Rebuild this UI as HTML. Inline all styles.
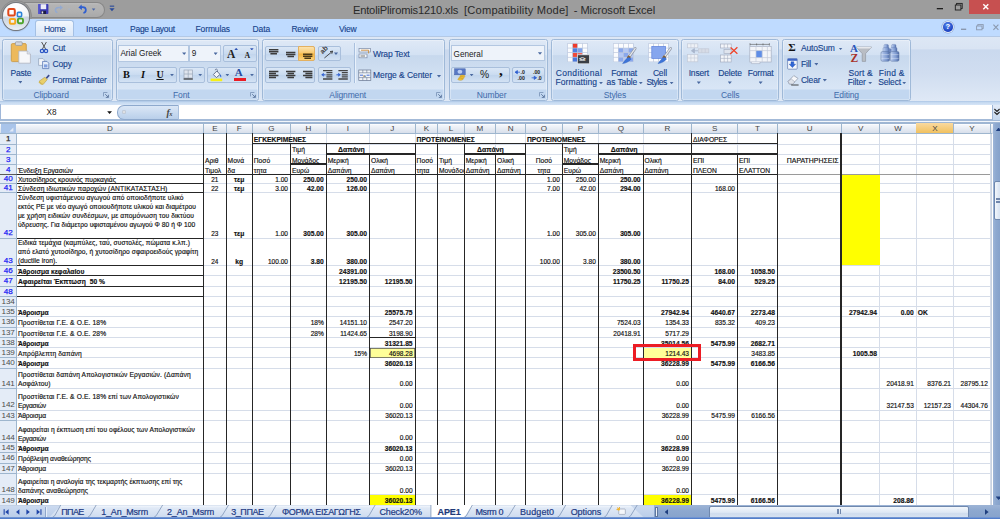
<!DOCTYPE html>
<html lang="el">
<head>
<meta charset="utf-8">
<title>EntoliPliromis1210.xls [Compatibility Mode] - Microsoft Excel</title>
<style>
html,body{margin:0;padding:0;}
body{width:1000px;height:519px;overflow:hidden;position:relative;background:#fff;font-family:"Liberation Sans",sans-serif;}
#app{position:absolute;left:0;top:0;width:1000px;height:519px;overflow:hidden;background:#fff;}
.ln{position:absolute;}
.c{position:absolute;font-size:6.7px;line-height:8.6px;color:#111;-webkit-text-stroke:0.16px #111;white-space:nowrap;overflow:hidden;box-sizing:border-box;padding:0 1.6px 0 1.4px;text-align:left;}
.c.r{text-align:right;font-size:6.55px;padding-right:2.6px;}
.c.n{font-size:6.4px;}
.c.r.b{font-size:6.7px;}
.c.m{text-align:center;}
.c.b{font-weight:bold;color:#111;}
.c.w{white-space:nowrap;line-height:9.0px;}
.rh{position:absolute;left:0;width:16.4px;font-size:8.1px;letter-spacing:-0.12px;display:flex;align-items:flex-end;justify-content:center;line-height:8.6px;}
.rh span{display:block;margin-bottom:-0.1px;}
.rh.k span{-webkit-text-stroke:0.25px currentColor;}
.ch{position:absolute;top:124.1px;height:10px;line-height:10px;font-size:8.1px;color:#444;text-align:center;}
.colhdr{background:linear-gradient(#ffffff 0,#f2f5fa 14%,#e6ebf3 50%,#d4dce9 100%);}
.t{position:absolute;white-space:nowrap;color:#15428b;font-size:8.5px;line-height:10px;letter-spacing:-0.17px;margin-top:-1px;-webkit-text-stroke:0.12px #15428b;}
.gl{position:absolute;white-space:nowrap;color:#3e6aaa;font-size:8.5px;line-height:10px;text-align:center;letter-spacing:-0.12px;margin-top:-0.9px;}
.grp{position:absolute;top:38.6px;height:62px;border:1px solid #9fb9d8;border-radius:2.5px;box-sizing:border-box;background:linear-gradient(#dfe9f6 0%,#d3e1f3 25%,#c7d8ed 26%,#d9e6f6 82%,#c2d7f0 83%,#c2d7f0 100%);box-shadow:inset 0 0 0 0.6px rgba(255,255,255,.55);}
.btng{position:absolute;border:1px solid #a9bfdc;border-radius:2px;box-sizing:border-box;background:linear-gradient(#dbe7f6,#c9dbf0 50%,#c0d4ec 51%,#d3e2f4);}
.inp{position:absolute;border:1px solid #b3c7e1;box-sizing:border-box;background:#eef3fa;}
.arr{position:absolute;width:4.2px;height:2.5px;background:#4a69a0;clip-path:polygon(0 0,100% 0,50% 100%);margin-left:-0.5px;}
.tb{font-size:9px;line-height:11px;color:#1c3a84;white-space:nowrap;text-align:left;-webkit-text-stroke:0.2px #1c3a84;}
.tt{top:3.9px;font-size:11.15px;line-height:13px;color:#2a2a2a;white-space:pre;}
</style>
</head>
<body>
<div id="app">
<!-- ===== title bar ===== -->
<div class="ln" style="left:0;top:0;width:1000px;height:19.2px;background:#9d9d9d"></div>
<div class="ln" style="left:0;top:19px;width:1000px;height:18px;background:#bfdbff"></div>
<div class="ln tt" style="left:352.9px;letter-spacing:-0.17px">EntoliPliromis1210.xls</div>
<div class="ln tt" style="left:464.1px;letter-spacing:0.18px">[Compatibility Mode]</div>
<div class="ln tt" style="left:573.7px;letter-spacing:-0.05px">- Microsoft Excel</div>
<!-- window buttons -->
<div class="ln" style="left:969.2px;top:0;width:30.8px;height:14px;background:#c75050"></div>
<svg class="ln" style="left:930px;top:0" width="70" height="16" viewBox="0 0 70 16">
<rect x="6.8" y="8" width="6.2" height="1.3" fill="#1e1e1e"/>
<rect x="26.6" y="3.4" width="5.6" height="5" fill="none" stroke="#1e1e1e" stroke-width="0.9"/>
<rect x="25.3" y="5" width="5.6" height="5" fill="#9d9d9d" stroke="#1e1e1e" stroke-width="0.9"/>
<path d="M53.3 4.3 L58.3 9.3 M58.3 4.3 L53.3 9.3" stroke="#fff" stroke-width="1.4" fill="none"/>
</svg>
<!-- QAT -->
<div class="ln" style="left:20px;top:1.6px;width:85.4px;height:16.4px;border-radius:0 8.2px 8.2px 0;background:linear-gradient(#bcbcbc 0,#b4b4b4 14%,#b0b0b0 60%,#a9a9a9 100%);border:1px solid #878787;border-left:none;box-sizing:border-box"></div>
<div class="ln" style="left:0;top:0;width:40px;height:19.2px;overflow:hidden"><div class="ln" style="left:-0.4px;top:0.4px;width:32px;height:32px;border-radius:50%;background:#9d9d9d;border:1.2px solid #8c8c8c;box-sizing:border-box"></div></div>
<svg class="ln" style="left:36px;top:3.1px" width="84" height="14" viewBox="0 0 84 14">
<!-- save -->
<rect x="2.2" y="1" width="10.2" height="10" rx="0.8" fill="#3b3bb4"/>
<rect x="2.2" y="1" width="1.6" height="10" fill="#5a5ad0"/>
<rect x="4.6" y="1.2" width="5.6" height="5" fill="#ececf8"/>
<rect x="5" y="7.8" width="5" height="3.2" fill="#1c1c44"/>
<rect x="5.6" y="8.4" width="1.6" height="2.2" fill="#e4e4ee"/>
<!-- redo (disabled) -->
<path d="M21.4 9.6 C18.6 8.8 18.6 4.4 22.6 4.4 L24.6 4.4" fill="none" stroke="#93a9cf" stroke-width="1.5"/>
<path d="M24 2.2 L27 4.6 L24 7 Z" fill="#93a9cf"/>
<path d="M31.6 5.6 L35 5.6 L33.3 7.6 Z" fill="#a9b3c3"/>
<!-- undo -->
<path d="M47.4 10 C50.8 9.2 50.8 4.2 46.6 4.2 L44.8 4.2" fill="none" stroke="#2f5fd0" stroke-width="1.7"/>
<path d="M45.6 1.6 L42.4 4.4 L46 7 Z" fill="#2f5fd0"/>
<path d="M55.8 5.6 L59.4 5.6 L57.6 7.8 Z" fill="#4a67a6"/>
<!-- customize -->
<rect x="73.8" y="2.6" width="4.4" height="1.1" fill="#2a4a9a"/>
<path d="M73.4 5.2 L78.6 5.2 L76 8.2 Z" fill="#2a4a9a"/>
</svg>
<!-- office button -->
<div class="ln" style="left:2.5px;top:3.3px;width:26.3px;height:26.3px;border-radius:50%;background:radial-gradient(circle at 50% 20%,rgba(255,255,255,.95) 0%,rgba(255,255,255,0) 55%),linear-gradient(#fbfbfc 0%,#eff1f4 47%,#cbd4e0 53%,#dfe5ec 85%,#eef1f5 100%);box-shadow:0 0 0 1.1px #74777d, 0 1px 1.6px rgba(0,0,0,.4)"></div>
<svg class="ln" style="left:0;top:0" width="32" height="32" viewBox="0 0 32 32">
<rect x="8.3" y="9.1" width="6.5" height="6.5" rx="1.3" fill="rgba(255,255,255,.6)" stroke="#e0481a" stroke-width="2"/>
<rect x="17.4" y="12.4" width="4.2" height="4.2" rx="0.9" fill="rgba(255,255,255,.6)" stroke="#2c84d8" stroke-width="1.6"/>
<rect x="9.8" y="19" width="5.4" height="4.8" rx="1.1" fill="rgba(255,255,255,.6)" stroke="#f6a61a" stroke-width="1.9"/>
<rect x="17.9" y="18.6" width="5.1" height="4.6" rx="1.1" fill="rgba(255,255,255,.6)" stroke="#4ea42c" stroke-width="1.9"/>
</svg>
<!-- tabs -->
<div class="ln" style="left:35px;top:20px;width:39.4px;height:17px;border:1px solid #a4c0e4;border-bottom:none;border-radius:3px 3px 0 0;box-sizing:border-box;background:linear-gradient(#f2f7fd,#e3edfa 60%,#dbe7f6)"></div>
<div class="t" style="left:43.9px;top:24.5px;font-size:8.5px;letter-spacing:-0.297px">Home</div>
<div class="t" style="left:86.1px;top:24.5px;font-size:8.5px;letter-spacing:0.006px">Insert</div>
<div class="t" style="left:130px;top:24.5px;font-size:8.5px;letter-spacing:-0.258px">Page Layout</div>
<div class="t" style="left:195.5px;top:24.5px;font-size:8.5px;letter-spacing:-0.117px">Formulas</div>
<div class="t" style="left:252.5px;top:24.5px;font-size:8.5px;letter-spacing:-0.117px">Data</div>
<div class="t" style="left:291.5px;top:24.5px;font-size:8.5px;letter-spacing:-0.312px">Review</div>
<div class="t" style="left:339px;top:24.5px;font-size:8.5px;letter-spacing:-0.195px">View</div>
<!-- help & mdi buttons -->
<div class="ln" style="left:942.6px;top:21.8px;width:10.4px;height:10.4px;border-radius:50%;background:radial-gradient(circle at 45% 35%,#5b8df0,#1a3fc0 70%,#15309a);box-shadow:0 0 0 0.9px #e4ecf8,0 0 0 1.5px #8aa4d0"></div>
<div class="ln" style="left:942.6px;top:22px;width:10.4px;height:10.4px;line-height:10.4px;text-align:center;font-size:7.6px;font-weight:bold;color:#fff">?</div>
<svg class="ln" style="left:958px;top:21px" width="42" height="12" viewBox="0 0 42 12">
<rect x="3" y="7.6" width="5.2" height="1.4" fill="#8a98ae"/>
<rect x="19.8" y="3.6" width="5.4" height="3.8" fill="none" stroke="#8a98ae" stroke-width="0.9"/>
<rect x="18.6" y="5" width="5.4" height="3.8" fill="#bfdbff" stroke="#8a98ae" stroke-width="0.9"/>
<path d="M35.4 3.6 L40.4 8.8 M40.4 3.6 L35.4 8.8" stroke="#8a98ae" stroke-width="1.1" fill="none"/>
</svg>
<!-- ===== ribbon body ===== -->
<div class="ln" style="left:0;top:36px;width:1000px;height:66px;background:linear-gradient(#dde7f5 0%,#d9e4f3 18%,#cad9ee 20%,#d0ddf0 55%,#dfe9f6 100%);border-top:1px solid #b3c9e6;box-sizing:border-box"></div>
<div class="ln" style="left:0;top:101.4px;width:1000px;height:3.6px;background:linear-gradient(#a9c3e4 0,#c3d8f0 30%,#d6e5f7 100%)"></div>
<!-- group frames -->
<div class="grp" style="left:2.1px;width:110.8px"></div>
<div class="grp" style="left:115.8px;width:143.6px"></div>
<div class="grp" style="left:262.2px;width:183.2px"></div>
<div class="grp" style="left:448.6px;width:99.6px"></div>
<div class="grp" style="left:550.8px;width:128.2px"></div>
<div class="grp" style="left:681.2px;width:98px"></div>
<div class="grp" style="left:781.8px;width:129px"></div>
<!-- group labels -->
<div class="gl" style="left:2.6px;width:97px;top:91px">Clipboard</div>
<div class="gl" style="left:115.8px;width:131px;top:91px">Font</div>
<div class="gl" style="left:262.2px;width:171px;top:91px">Alignment</div>
<div class="gl" style="left:448.6px;width:86px;top:91px">Number</div>
<div class="gl" style="left:550.8px;width:128.2px;top:91px">Styles</div>
<div class="gl" style="left:681.2px;width:98px;top:91px">Cells</div>
<div class="gl" style="left:781.8px;width:129px;top:91px">Editing</div>
<!-- dialog launchers -->
<svg class="ln" style="left:103.4px;top:92px" width="6" height="6" viewBox="0 0 6 6"><path d="M0.5 4.4 V0.5 H4.4" stroke="#7f98bb" stroke-width="0.9" fill="none"/><path d="M2.2 2.2 L5.2 5.2 M5.4 2.8 V5.4 H2.8" stroke="#5b769d" stroke-width="0.9" fill="none"/></svg>
<svg class="ln" style="left:250.2px;top:92px" width="6" height="6" viewBox="0 0 6 6"><path d="M0.5 4.4 V0.5 H4.4" stroke="#7f98bb" stroke-width="0.9" fill="none"/><path d="M2.2 2.2 L5.2 5.2 M5.4 2.8 V5.4 H2.8" stroke="#5b769d" stroke-width="0.9" fill="none"/></svg>
<svg class="ln" style="left:436.4px;top:92px" width="6" height="6" viewBox="0 0 6 6"><path d="M0.5 4.4 V0.5 H4.4" stroke="#7f98bb" stroke-width="0.9" fill="none"/><path d="M2.2 2.2 L5.2 5.2 M5.4 2.8 V5.4 H2.8" stroke="#5b769d" stroke-width="0.9" fill="none"/></svg>
<svg class="ln" style="left:539px;top:92px" width="6" height="6" viewBox="0 0 6 6"><path d="M0.5 4.4 V0.5 H4.4" stroke="#7f98bb" stroke-width="0.9" fill="none"/><path d="M2.2 2.2 L5.2 5.2 M5.4 2.8 V5.4 H2.8" stroke="#5b769d" stroke-width="0.9" fill="none"/></svg>

<!-- ===== Clipboard ===== -->
<svg class="ln" style="left:9px;top:40px" width="26" height="28" viewBox="0 0 26 28">
<rect x="2.3" y="3.6" width="15" height="18" rx="1.2" fill="#ecb95c" stroke="#c9963c" stroke-width="0.8"/>
<rect x="6.4" y="1.8" width="6.8" height="3.6" rx="0.9" fill="#d3d7de" stroke="#8d939d" stroke-width="0.7"/>
<rect x="8.6" y="1" width="2.4" height="1.6" rx="0.6" fill="#b9bec8"/>
<path d="M9.8 11 H18.2 L21.4 14 V23.2 H9.8 Z" fill="#f6f7fa" stroke="#aeb4c0" stroke-width="0.8"/>
<path d="M18.2 11 V14 H21.4" fill="#dfe3ea" stroke="#aeb4c0" stroke-width="0.6"/>
</svg>
<div class="t" style="left:10.4px;top:68.6px">Paste</div>
<div class="arr" style="left:18.8px;top:81px"></div>
<svg class="ln" style="left:38px;top:41px" width="14" height="14" viewBox="0 0 14 14">
<path d="M3.6 1 L7.6 8 M8.4 1 L4.4 8" stroke="#555" stroke-width="1" fill="none"/>
<circle cx="4" cy="10" r="1.7" fill="none" stroke="#2b56c4" stroke-width="1.2"/>
<circle cx="8" cy="10" r="1.7" fill="none" stroke="#2b56c4" stroke-width="1.2"/>
</svg>
<div class="t" style="left:52.6px;top:43.6px">Cut</div>
<svg class="ln" style="left:37px;top:57px" width="14" height="13" viewBox="0 0 14 13">
<path d="M1.6 1.6 H6 L7.6 3.2 V8.4 H1.6 Z" fill="#f2f5fa" stroke="#8ea0ba" stroke-width="0.7"/>
<path d="M5.6 4.4 H10 L11.8 6.2 V11.6 H5.6 Z" fill="#e4ecf9" stroke="#5a78b5" stroke-width="0.8"/>
<rect x="7" y="7.4" width="3.4" height="3" fill="#7f9fdf"/>
</svg>
<div class="t" style="left:52.6px;top:59.6px">Copy</div>
<svg class="ln" style="left:37px;top:73px" width="14" height="13" viewBox="0 0 14 13">
<path d="M8.6 4.8 L11.6 1.6 L12.8 2.8 L9.8 6 Z" fill="#3d4b8f"/>
<path d="M2 8.4 L7.8 4.2 L10.2 6.6 L6 11.6 Z" fill="#e9cf6a" stroke="#b89a3a" stroke-width="0.6"/>
<path d="M2 8.4 L6 11.6 L4.2 11.8 L1.6 9.6 Z" fill="#d6b84c"/>
</svg>
<div class="t" style="left:52.6px;top:75.8px;letter-spacing:-0.15px">Format Painter</div>

<!-- ===== Font ===== -->
<div class="inp" style="left:118.4px;top:45.4px;width:71px;height:16.2px"></div>
<div class="inp" style="left:189.2px;top:45.4px;width:31.8px;height:16.2px"></div>
<div class="ln" style="left:120.4px;top:49.4px;font-size:8.2px;line-height:10px;color:#222">Arial Greek</div>
<div class="ln" style="left:191.8px;top:49.4px;font-size:8.2px;line-height:10px;color:#222">9</div>
<div class="arr" style="left:182.6px;top:52.4px"></div>
<div class="arr" style="left:214px;top:52.4px"></div>
<div class="btng" style="left:223.4px;top:45.4px;width:33.2px;height:16.2px"></div>
<div class="ln" style="left:227px;top:46.6px;font-family:'Liberation Serif',serif;font-weight:bold;font-size:11.5px;line-height:14px;color:#222">A</div>
<div class="ln" style="left:244.6px;top:50px;font-family:'Liberation Serif',serif;font-weight:bold;font-size:7.8px;line-height:11px;color:#222">A</div>
<div class="ln" style="left:234.4px;top:47.8px;width:3.6px;height:2.2px;background:#2f55b5;clip-path:polygon(50% 0,100% 100%,0 100%)"></div>
<div class="ln" style="left:250px;top:48.2px;width:3.6px;height:2.2px;background:#2f55b5;clip-path:polygon(0 0,100% 0,50% 100%)"></div>
<div class="btng" style="left:118.4px;top:67px;width:58.8px;height:15.6px"></div>
<div class="ln" style="left:123px;top:68px;font-family:'Liberation Serif',serif;font-weight:bold;font-size:10.4px;line-height:13px;color:#111">B</div>
<div class="ln" style="left:141px;top:68px;font-family:'Liberation Serif',serif;font-weight:bold;font-style:italic;font-size:10.4px;line-height:13px;color:#111">I</div>
<div class="ln" style="left:156.4px;top:67.6px;font-family:'Liberation Serif',serif;font-weight:bold;font-size:10px;line-height:13px;color:#111;text-decoration:underline">U</div>
<div class="arr" style="left:170.4px;top:73.8px"></div>
<div class="btng" style="left:179.4px;top:67px;width:25.4px;height:15.6px"></div>
<svg class="ln" style="left:183px;top:69px" width="11" height="12" viewBox="0 0 11 12"><rect x="1" y="1" width="8.4" height="8" fill="#dfe5ee" stroke="#9aa6b8" stroke-width="0.7"/><path d="M5.2 1 V9 M1 5 H9.4" stroke="#9aa6b8" stroke-width="0.7"/><rect x="0.6" y="9.4" width="9.2" height="1.2" fill="#333"/></svg>
<div class="arr" style="left:198.6px;top:73.8px"></div>
<div class="btng" style="left:207.2px;top:67px;width:49.4px;height:15.6px"></div>
<svg class="ln" style="left:209.6px;top:68px" width="14" height="14" viewBox="0 0 14 14">
<path d="M3.4 6.6 L6.8 3 L10 6.4 L6.4 9.6 Z" fill="#f3f5fa" stroke="#4a5a7a" stroke-width="0.8"/>
<path d="M5.2 2.2 C5.2 0.6 7.4 0.6 7.4 2.4 V4" fill="none" stroke="#4a5a7a" stroke-width="0.7"/>
<path d="M10 6.4 C11.4 7 11.6 8.6 11 9.4 C10.2 8.6 9.6 7.6 10 6.4Z" fill="#2f66d0"/>
<rect x="0.6" y="10.6" width="11.6" height="2.6" fill="#f6ef16"/>
</svg>
<div class="arr" style="left:225.8px;top:73.8px"></div>
<div class="ln" style="left:234.8px;top:66.4px;font-family:'Liberation Serif',serif;font-weight:bold;font-size:11px;line-height:13px;color:#274a9c">A</div>
<div class="ln" style="left:234px;top:78.4px;width:12px;height:2.6px;background:#ea1c24"></div>
<div class="arr" style="left:250.4px;top:73.8px"></div>

<!-- ===== Alignment ===== -->
<div class="btng" style="left:264.6px;top:45.6px;width:50.6px;height:15.8px"></div>
<div class="ln" style="left:298.2px;top:45.6px;width:17px;height:15.8px;background:linear-gradient(#fce3ae,#f9c970 45%,#f6b640 55%,#fbd27c);border:1px solid #e3b060;box-sizing:border-box;border-radius:0 2px 2px 0"></div>
<svg class="ln" style="left:264.6px;top:45.6px" width="51" height="16" viewBox="0 0 51 16">
<g stroke="#3c3c3c" stroke-width="1.5"><path d="M4 3.8 H13.4 M4 5.8 H13.4 M5.4 7.8 H12"/><path d="M21 6.4 H30.4 M21 8.4 H30.4 M22.4 10.4 H29"/><path d="M38 8.2 H47.4 M38 10.2 H47.4 M39.4 12.2 H46" stroke="#4a3a1a"/></g></svg>
<div class="btng" style="left:317.6px;top:45.6px;width:23.4px;height:15.8px"></div>
<svg class="ln" style="left:319.6px;top:46.4px" width="15" height="14" viewBox="0 0 15 14"><text x="0" y="0" font-family="Liberation Sans, sans-serif" font-size="7" font-weight="bold" fill="#3a3a3a" transform="translate(2.4 8.2) rotate(-42)">ab</text><path d="M4.4 12 L12.6 5.2 M12.6 5.2 L10 5.6 M12.6 5.2 L11.8 7.8" stroke="#3a3a3a" stroke-width="0.9" fill="none"/></svg>
<div class="arr" style="left:334.4px;top:52.4px"></div>
<div class="btng" style="left:264.6px;top:67px;width:50.6px;height:15.6px"></div>
<svg class="ln" style="left:264.6px;top:67px" width="51" height="16" viewBox="0 0 51 16">
<g stroke="#3c3c3c" stroke-width="1.5"><path d="M4 4.4 H13.4 M4 6.4 H11 M4 8.4 H13.4 M4 10.4 H11"/><path d="M21 4.4 H30.4 M22.4 6.4 H29 M21 8.4 H30.4 M22.4 10.4 H29"/><path d="M38 4.4 H47.4 M40.4 6.4 H47.4 M38 8.4 H47.4 M40.4 10.4 H47.4"/></g></svg>
<div class="btng" style="left:317.6px;top:67px;width:33.2px;height:15.6px"></div>
<svg class="ln" style="left:317.6px;top:67px" width="34" height="16" viewBox="0 0 34 16">
<g stroke="#444" stroke-width="1.3"><path d="M5 3.6 H14.4 M8.4 5.7 H14.4 M8.4 7.8 H14.4 M8.4 9.9 H14.4 M5 12 H14.4"/><path d="M20.4 3.6 H29.8 M23.8 5.7 H29.8 M23.8 7.8 H29.8 M23.8 9.9 H29.8 M20.4 12 H29.8"/></g>
<path d="M3.2 7.8 L5.8 5.8 V9.8 Z" fill="#2f5fd0"/><path d="M5.6 7.8 H7.6" stroke="#2f5fd0" stroke-width="1"/>
<path d="M22.8 7.8 L20.2 5.8 V9.8 Z" fill="#2f5fd0"/><path d="M18.4 7.8 H20.6" stroke="#2f5fd0" stroke-width="1"/>
</svg>
<div class="ln" style="left:354.2px;top:43px;width:1px;height:40px;background:#a9c0de"></div>
<div class="ln" style="left:355.2px;top:43px;width:1px;height:40px;background:#e9f1fb"></div>
<svg class="ln" style="left:358px;top:47px" width="14" height="13" viewBox="0 0 14 13">
<rect x="1" y="1.4" width="11.4" height="3.6" fill="#f6f8fb" stroke="#7a8aa6" stroke-width="0.7"/>
<rect x="1" y="7" width="8" height="3.8" fill="#f6f8fb" stroke="#7a8aa6" stroke-width="0.7"/>
<path d="M3 3.2 H10.6 V6.4" stroke="#c88a3a" stroke-width="0.9" fill="none"/>
<path d="M2.6 9 H7" stroke="#555" stroke-width="0.8"/>
</svg>
<div class="t" style="left:373px;top:49.7px">Wrap Text</div>
<svg class="ln" style="left:358px;top:69px" width="14" height="13" viewBox="0 0 14 13">
<rect x="0.8" y="1" width="12" height="10.4" fill="#f1f4f9" stroke="#66758f" stroke-width="0.7"/>
<path d="M0.8 3.8 H12.8 M0.8 8.6 H12.8 M4.8 1 V3.8 M8.8 1 V3.8 M4.8 8.6 V11.4 M8.8 8.6 V11.4" stroke="#66758f" stroke-width="0.6"/>
<path d="M2 6.2 H5 M8.6 6.2 H11.6" stroke="#2f5fd0" stroke-width="0.9"/>
<text x="5.2" y="7.8" font-family="Liberation Sans, sans-serif" font-size="4.4" fill="#222">a</text>
</svg>
<div class="t" style="left:373px;top:71.2px;letter-spacing:-0.07px">Merge &amp; Center</div>
<div class="arr" style="left:437.4px;top:75px"></div>

<!-- ===== Number ===== -->
<div class="inp" style="left:451.4px;top:45.4px;width:94px;height:15.8px"></div>
<div class="ln" style="left:453.6px;top:49.9px;font-size:8.2px;line-height:10px;color:#222">General</div>
<div class="arr" style="left:538.4px;top:52.2px"></div>
<div class="btng" style="left:451.4px;top:67px;width:58.8px;height:15.6px"></div>
<svg class="ln" style="left:453.6px;top:68.4px" width="14" height="13" viewBox="0 0 14 13">
<rect x="0.6" y="0.8" width="10.6" height="6" fill="#5878c4" stroke="#3f5ca8" stroke-width="0.5"/>
<ellipse cx="5.9" cy="3.8" rx="2.4" ry="2" fill="#b9cdf4"/>
<ellipse cx="8.4" cy="8.2" rx="2.6" ry="1.1" fill="#f0c23a" stroke="#b98a1a" stroke-width="0.4"/>
<ellipse cx="7.6" cy="9.8" rx="2.6" ry="1.1" fill="#f0c23a" stroke="#b98a1a" stroke-width="0.4"/>
<ellipse cx="6.4" cy="11.2" rx="2.6" ry="1.1" fill="#f0c23a" stroke="#b98a1a" stroke-width="0.4"/>
</svg>
<div class="arr" style="left:470px;top:73.8px"></div>
<div class="ln" style="left:480px;top:68.8px;font-size:10.3px;line-height:12px;color:#222">%</div>
<div class="ln" style="left:499px;top:61.6px;font-family:'Liberation Serif',serif;font-weight:bold;font-size:15.5px;line-height:16px;color:#111">,</div>
<div class="btng" style="left:512.4px;top:67px;width:33px;height:15.6px"></div>
<svg class="ln" style="left:512.4px;top:67px" width="33" height="16" viewBox="0 0 33 16">
<g font-family="Liberation Sans, sans-serif" font-size="5.2" fill="#222" font-weight="bold"><text x="8.6" y="7">.0</text><text x="5.6" y="12.6">.00</text><text x="21" y="7">.00</text><text x="25.4" y="12.6">.0</text></g>
<path d="M3 5.2 L5.4 3.6 V6.8 Z M5 5.2 H8" fill="#2f5fd0" stroke="#2f5fd0" stroke-width="0.8"/>
<path d="M24.6 10.8 L22.2 9.2 V12.4 Z M19.6 10.8 H22.6" fill="#2f5fd0" stroke="#2f5fd0" stroke-width="0.8"/>
</svg>

<!-- ===== Styles ===== -->
<svg class="ln" style="left:567px;top:43px" width="24" height="22" viewBox="0 0 24 22"><rect x="0.3" y="0.2" width="20.6" height="18.6" fill="#bcc8de"/><rect x="0.90" y="0.80" width="4.3" height="3.9" fill="#fbfcfe"/><rect x="5.90" y="0.80" width="4.3" height="3.9" fill="#ee3b2b"/><rect x="10.90" y="0.80" width="4.3" height="3.9" fill="#fbfcfe"/><rect x="15.90" y="0.80" width="4.3" height="3.9" fill="#fbfcfe"/><rect x="0.90" y="5.40" width="4.3" height="3.9" fill="#fbfcfe"/><rect x="5.90" y="5.40" width="4.3" height="3.9" fill="#4f7fe0"/><rect x="10.90" y="5.40" width="4.3" height="3.9" fill="#7fa2ea"/><rect x="15.90" y="5.40" width="4.3" height="3.9" fill="#fbfcfe"/><rect x="0.90" y="10.00" width="4.3" height="3.9" fill="#fbfcfe"/><rect x="5.90" y="10.00" width="4.3" height="3.9" fill="#ee4a3a"/><rect x="10.90" y="10.00" width="4.3" height="3.9" fill="#f0695c"/><rect x="15.90" y="10.00" width="4.3" height="3.9" fill="#fbfcfe"/><rect x="0.90" y="14.60" width="4.3" height="3.9" fill="#fbfcfe"/><rect x="5.90" y="14.60" width="4.3" height="3.9" fill="#4a78dc"/><rect x="10.90" y="14.60" width="4.3" height="3.9" fill="#fbfcfe"/><rect x="15.90" y="14.60" width="4.3" height="3.9" fill="#fbfcfe"/><rect x="10.4" y="11.8" width="12" height="9" fill="#3b3f46" stroke="#e6e9ee" stroke-width="0.7"/><text x="12.2" y="18.4" font-family="Liberation Sans, sans-serif" font-size="5.8" font-weight="bold" fill="#fff">≤≥</text></svg>
<div class="t" style="left:555.4px;width:47px;text-align:center;top:69.2px;letter-spacing:0.36px">Conditional</div>
<div class="t" style="left:555.4px;top:78px;letter-spacing:0.12px">Formatting</div>
<div class="arr" style="left:599.4px;top:81.7px"></div>
<svg class="ln" style="left:612px;top:43px" width="26" height="22" viewBox="0 0 26 22"><rect x="1.1" y="0.2" width="20.6" height="18.6" fill="#bcc8de"/><rect x="1.70" y="0.80" width="4.3" height="3.9" fill="#fbfcfe"/><rect x="6.70" y="0.80" width="4.3" height="3.9" fill="#fbfcfe"/><rect x="11.70" y="0.80" width="4.3" height="3.9" fill="#fbfcfe"/><rect x="16.70" y="0.80" width="4.3" height="3.9" fill="#fbfcfe"/><rect x="1.70" y="5.40" width="4.3" height="3.9" fill="#fbfcfe"/><rect x="6.70" y="5.40" width="4.3" height="3.9" fill="#8aa8ec"/><rect x="11.70" y="5.40" width="4.3" height="3.9" fill="#b4c8f4"/><rect x="16.70" y="5.40" width="4.3" height="3.9" fill="#8aa8ec"/><rect x="1.70" y="10.00" width="4.3" height="3.9" fill="#fbfcfe"/><rect x="6.70" y="10.00" width="4.3" height="3.9" fill="#b4c8f4"/><rect x="11.70" y="10.00" width="4.3" height="3.9" fill="#8aa8ec"/><rect x="16.70" y="10.00" width="4.3" height="3.9" fill="#b4c8f4"/><rect x="1.70" y="14.60" width="4.3" height="3.9" fill="#fbfcfe"/><rect x="6.70" y="14.60" width="4.3" height="3.9" fill="#8aa8ec"/><rect x="11.70" y="14.60" width="4.3" height="3.9" fill="#b4c8f4"/><rect x="16.70" y="14.60" width="4.3" height="3.9" fill="#8aa8ec"/><path d="M23.2 5.4 L17.6 13.2" stroke="#8f96a3" stroke-width="2.6" stroke-linecap="round"/><path d="M23.2 5.4 L17.6 13.2" stroke="#e4e7ec" stroke-width="1.3" stroke-linecap="round"/><path d="M17.6 13.2 l-1.6 2.1" stroke="#8a6230" stroke-width="3"/><path d="M16.8 14.2 c-2.6 1.2 -4 3.4 -6.2 6.4 c3.6 -0.4 6.6 -2.2 8.6 -4.6 z" fill="#3c74d8" stroke="#2a5ab8" stroke-width="0.4"/></svg>
<div class="t" style="left:606.6px;width:35px;text-align:center;top:69.2px">Format</div>
<div class="t" style="left:606.6px;top:78px;letter-spacing:-0.12px">as Table</div>
<div class="arr" style="left:639.2px;top:81.7px"></div>
<svg class="ln" style="left:647px;top:43px" width="26" height="22" viewBox="0 0 26 22"><rect x="1.3" y="0.2" width="20.6" height="18.6" fill="#bcc8de"/><rect x="1.90" y="0.80" width="4.3" height="3.9" fill="#fbfcfe"/><rect x="6.90" y="0.80" width="4.3" height="3.9" fill="#fbfcfe"/><rect x="11.90" y="0.80" width="4.3" height="3.9" fill="#fbfcfe"/><rect x="16.90" y="0.80" width="4.3" height="3.9" fill="#fbfcfe"/><rect x="1.90" y="5.40" width="4.3" height="3.9" fill="#fbfcfe"/><rect x="6.90" y="5.40" width="4.3" height="3.9" fill="#fbfcfe"/><rect x="11.90" y="5.40" width="4.3" height="3.9" fill="#fbfcfe"/><rect x="16.90" y="5.40" width="4.3" height="3.9" fill="#fbfcfe"/><rect x="1.90" y="10.00" width="4.3" height="3.9" fill="#fbfcfe"/><rect x="6.90" y="10.00" width="4.3" height="3.9" fill="#fbfcfe"/><rect x="11.90" y="10.00" width="4.3" height="3.9" fill="#fbfcfe"/><rect x="16.90" y="10.00" width="4.3" height="3.9" fill="#fbfcfe"/><rect x="1.90" y="14.60" width="4.3" height="3.9" fill="#fbfcfe"/><rect x="6.90" y="14.60" width="4.3" height="3.9" fill="#fbfcfe"/><rect x="11.90" y="14.60" width="4.3" height="3.9" fill="#fbfcfe"/><rect x="16.90" y="14.60" width="4.3" height="3.9" fill="#fbfcfe"/><rect x="4.8" y="3.4" width="13.8" height="12" fill="#86a6ee" stroke="#5c82dc" stroke-width="0.7"/><path d="M23.6 5.4 L18 13.2" stroke="#8f96a3" stroke-width="2.6" stroke-linecap="round"/><path d="M23.6 5.4 L18 13.2" stroke="#e4e7ec" stroke-width="1.3" stroke-linecap="round"/><path d="M18 13.2 l-1.6 2.1" stroke="#8a6230" stroke-width="3"/><path d="M17.2 14.2 c-2.6 1.2 -4 3.4 -6.2 6.4 c3.6 -0.4 6.6 -2.2 8.6 -4.6 z" fill="#3c74d8" stroke="#2a5ab8" stroke-width="0.4"/></svg>
<div class="t" style="left:646.4px;width:27px;text-align:center;top:69.2px">Cell</div>
<div class="t" style="left:646.4px;top:78px;letter-spacing:-0.45px">Styles</div>
<div class="arr" style="left:670px;top:81.7px"></div>

<!-- ===== Cells ===== -->
<svg class="ln" style="left:686px;top:42px" width="26" height="22" viewBox="0 0 26 22">
<g fill="#eef1f6" stroke="#c3cad8" stroke-width="0.7"><rect x="1.4" y="1.8" width="10.4" height="4"/><rect x="12.4" y="6.8" width="10.4" height="4" fill="#d7dce6"/><rect x="1.4" y="12.4" width="10.4" height="7.4"/></g>
<path d="M1.4 16 H11.8 M4.9 1.8 V5.8 M8.4 1.8 V5.8 M4.9 12.4 V19.8 M8.4 12.4 V19.8 M15.8 6.8 V10.8 M19.2 6.8 V10.8" stroke="#c3cad8" stroke-width="0.6"/>
<path d="M5.4 8.8 L8.4 6.6 V11 Z M8 8.8 H12" fill="#a9b6cc" stroke="#a9b6cc" stroke-width="0.9"/>
</svg>
<div class="t" style="left:681.2px;width:35.2px;text-align:center;top:69.2px">Insert</div>
<div class="arr" style="left:697.2px;top:81.4px"></div>
<svg class="ln" style="left:718px;top:42px" width="24" height="22" viewBox="0 0 24 22">
<g fill="#f3f5f9" stroke="#a7b0c2" stroke-width="0.7"><rect x="2.6" y="2" width="10.6" height="4"/><rect x="6" y="7.6" width="7.2" height="4" fill="#dfe4ee"/><rect x="2.6" y="13" width="10.6" height="7"/></g>
<path d="M2.6 16.4 H13.2 M6.2 2 V6 M9.6 2 V6 M6.2 13 V20 M9.6 13 V20" stroke="#a7b0c2" stroke-width="0.6"/>
<path d="M12.6 5.6 L19.4 11.8 M19.4 5.2 L12.2 12" stroke="#f0442a" stroke-width="1.3"/>
</svg>
<div class="t" style="left:712.4px;width:35.2px;text-align:center;top:69.2px">Delete</div>
<div class="arr" style="left:728.2px;top:81.4px"></div>
<svg class="ln" style="left:748px;top:42px" width="26" height="24" viewBox="0 0 26 24">
<path d="M2 2.4 H21.4" stroke="#555" stroke-width="0.6"/><path d="M2 1.2 V3.6 M21.4 1.2 V3.6 M8.6 1.4 V3.4 M15 1.4 V3.4" stroke="#555" stroke-width="0.6"/>
<rect x="1.8" y="4.4" width="21.4" height="15.6" fill="#f3f5f9" stroke="#a7b0c2" stroke-width="0.7"/>
<rect x="8" y="8.6" width="6.2" height="7" fill="#5f8de6"/>
<path d="M1.8 8.6 H23.2 M1.8 15.6 H23.2 M8 4.4 V20 M14.2 4.4 V20 M19.4 4.4 V20" stroke="#c3cad8" stroke-width="0.7"/>
<path d="M3.4 20 V21.6 H12 V20" fill="#e9edf4" stroke="#a7b0c2" stroke-width="0.6"/>
</svg>
<div class="t" style="left:743px;width:35.2px;text-align:center;top:69.2px">Format</div>
<div class="arr" style="left:759px;top:81.4px"></div>

<!-- ===== Editing ===== -->
<div class="ln" style="left:788.2px;top:40.4px;font-family:'Liberation Serif',serif;font-weight:bold;font-size:11.4px;line-height:14px;color:#111">Σ</div>
<div class="t" style="left:800.9px;top:44px">AutoSum</div>
<div class="arr" style="left:839px;top:47.6px"></div>
<svg class="ln" style="left:787px;top:58px" width="11" height="12" viewBox="0 0 11 12">
<rect x="0.6" y="0.6" width="9.6" height="10.6" rx="0.8" fill="#f4f7fc" stroke="#6f86b6" stroke-width="0.8"/>
<rect x="0.6" y="0.6" width="9.6" height="2.2" fill="#3f66c6"/>
<path d="M4 3.8 H6.8 V6.2 H8.6 L5.4 9.6 L2.2 6.2 H4 Z" fill="#2f66d6" stroke="#1f4aa8" stroke-width="0.4"/>
</svg>
<div class="t" style="left:800.9px;top:59.9px">Fill</div>
<div class="arr" style="left:814.8px;top:63px"></div>
<svg class="ln" style="left:786.6px;top:74px" width="13" height="12" viewBox="0 0 13 12">
<path d="M1 7.4 L6.8 1.6 L11 4.4 L5.6 10 L2.4 10 Z" fill="#f6f7fa" stroke="#8a93a6" stroke-width="0.7"/>
<path d="M1 7.4 L4.4 5 L8 8 L5.6 10 L2.4 10 Z" fill="#dfe3ea" stroke="#8a93a6" stroke-width="0.5"/>
<path d="M4.2 11 H11.6" stroke="#333" stroke-width="0.9"/>
</svg>
<div class="t" style="left:800.9px;top:75.6px">Clear</div>
<div class="arr" style="left:823.2px;top:79px"></div>
<svg class="ln" style="left:848px;top:41px" width="26" height="24" viewBox="0 0 26 24">
<text x="2" y="10.6" font-family="Liberation Serif, serif" font-weight="bold" font-size="11" fill="#2a55b8">A</text>
<text x="2.4" y="21.4" font-family="Liberation Serif, serif" font-weight="bold" font-size="11.6" fill="#a8322a">Z</text>
<path d="M8.4 6 H23.6 L17.6 12.6 V20.4 L14.2 20.4 V12.6 Z" fill="#b9bdc4" stroke="#8a8f98" stroke-width="0.6"/>
<path d="M8.4 6 H23.6 L22 7.6 H10 Z" fill="#e6e8ec"/>
</svg>
<div class="t" style="left:847.8px;width:25.6px;text-align:center;top:69.2px;letter-spacing:0.13px">Sort &amp;</div>
<div class="t" style="left:847.8px;top:78px">Filter</div>
<div class="arr" style="left:868.6px;top:81.7px"></div>
<svg class="ln" style="left:879px;top:42px" width="24" height="22" viewBox="0 0 24 22">
<defs><linearGradient id="bn" x1="0" x2="1"><stop offset="0" stop-color="#c9d8f2"/><stop offset=".3" stop-color="#9fb6e2"/><stop offset=".65" stop-color="#7f9bd0"/><stop offset="1" stop-color="#4f6aa6"/></linearGradient></defs>
<rect x="5" y="2.4" width="4.4" height="4.2" rx="1.2" fill="url(#bn)" stroke="#5f78b0" stroke-width="0.4"/><rect x="12.6" y="2.4" width="4.4" height="4.2" rx="1.2" fill="url(#bn)" stroke="#5f78b0" stroke-width="0.4"/>
<rect x="4" y="5.6" width="6.4" height="5" rx="1" fill="url(#bn)" stroke="#5f78b0" stroke-width="0.4"/><rect x="11.6" y="5.6" width="6.4" height="5" rx="1" fill="url(#bn)" stroke="#5f78b0" stroke-width="0.4"/>
<rect x="9.6" y="7" width="2.8" height="4" fill="#6a84bc"/>
<rect x="2" y="9.6" width="8.6" height="9.6" rx="1.4" fill="url(#bn)" stroke="#56709f" stroke-width="0.5"/><rect x="11.4" y="9.6" width="8.6" height="9.6" rx="1.4" fill="url(#bn)" stroke="#56709f" stroke-width="0.5"/>
<path d="M2.4 12.6 H10.2 M11.8 12.6 H19.6 M2.4 16.4 H10.2 M11.8 16.4 H19.6" stroke="#dfe8f8" stroke-width="0.6" opacity=".8"/>
</svg>
<div class="t" style="left:878.3px;width:27px;text-align:center;top:69.2px;letter-spacing:0.23px">Find &amp;</div>
<div class="t" style="left:878.3px;top:78px">Select</div>
<div class="arr" style="left:902.6px;top:81.7px"></div>

<!-- ===== formula bar ===== -->
<div class="ln" style="left:0;top:104.8px;width:1000px;height:15.2px;background:#fff"></div>
<div class="ln" style="left:0;top:118.9px;width:1000px;height:5px;background:linear-gradient(#a3bad8 0,#a3bad8 30%,#eef3fa 36%,#f4f7fc 56%,#a0b7d4 64%,#9db5d2 100%)"></div>
<div class="ln" style="left:117px;top:105.4px;width:62px;height:14.6px;background:linear-gradient(#dbe7f6,#b9cfea);border-radius:7px 0 0 7px;border:1px solid #8ea9cd;border-right:1px solid #a9c0de;box-sizing:border-box"></div>
<div class="ln" style="left:121.8px;top:109.6px;width:4.6px;height:4.6px;border-radius:50%;background:radial-gradient(#f2f2f2,#9aa6b8)"></div>
<div class="ln" style="left:166.4px;top:106.6px;font-family:'Liberation Serif',serif;font-style:italic;font-weight:bold;font-size:9.6px;line-height:12px;color:#444;letter-spacing:-0.4px">f<span style="font-size:6.4px">x</span></div>
<div class="ln" style="left:0;top:107.3px;width:103px;text-align:center;font-size:8.2px;line-height:11px;color:#222">X8</div>
<div class="ln" style="left:107.2px;top:111.2px;width:4.8px;height:2.8px;background:#111;clip-path:polygon(0 0,100% 0,50% 100%)"></div>
<div class="ln" style="left:991.6px;top:104.6px;width:8.4px;height:15.2px;background:linear-gradient(#e3ecf8,#c3d6ee);border-left:1px solid #9eb6d6;box-sizing:border-box"></div>
<div class="ln" style="left:0;top:104.2px;width:1.1px;height:16px;background:#9fb7d9"></div>
<svg class="ln" style="left:992.6px;top:108px" width="8" height="8" viewBox="0 0 8 8"><path d="M1.4 1 L4 3.4 L6.6 1 M1.4 4 L4 6.4 L6.6 4" stroke="#222" stroke-width="1.1" fill="none"/></svg>

<div class="ln" style="left:16.5px;width:973.9px;top:143.50px;height:1.0px;background:#d6dde9"></div>
<div class="ln" style="left:16.5px;width:973.9px;top:153.90px;height:1.0px;background:#d6dde9"></div>
<div class="ln" style="left:16.5px;width:973.9px;top:164.00px;height:1.0px;background:#d6dde9"></div>
<div class="ln" style="left:16.5px;width:973.9px;top:174.20px;height:1.0px;background:#d6dde9"></div>
<div class="ln" style="left:16.5px;width:973.9px;top:183.40px;height:1.0px;background:#d6dde9"></div>
<div class="ln" style="left:16.5px;width:973.9px;top:192.10px;height:1.0px;background:#d6dde9"></div>
<div class="ln" style="left:16.5px;width:973.9px;top:237.50px;height:1.0px;background:#d6dde9"></div>
<div class="ln" style="left:16.5px;width:973.9px;top:265.00px;height:1.0px;background:#d6dde9"></div>
<div class="ln" style="left:16.5px;width:973.9px;top:275.10px;height:1.0px;background:#d6dde9"></div>
<div class="ln" style="left:16.5px;width:973.9px;top:285.50px;height:1.0px;background:#d6dde9"></div>
<div class="ln" style="left:16.5px;width:973.9px;top:295.70px;height:1.0px;background:#d6dde9"></div>
<div class="ln" style="left:16.5px;width:973.9px;top:306.00px;height:1.0px;background:#d6dde9"></div>
<div class="ln" style="left:16.5px;width:973.9px;top:316.30px;height:1.0px;background:#d6dde9"></div>
<div class="ln" style="left:16.5px;width:973.9px;top:326.55px;height:1.0px;background:#d6dde9"></div>
<div class="ln" style="left:16.5px;width:973.9px;top:336.80px;height:1.0px;background:#d6dde9"></div>
<div class="ln" style="left:16.5px;width:973.9px;top:347.00px;height:1.0px;background:#d6dde9"></div>
<div class="ln" style="left:16.5px;width:973.9px;top:357.25px;height:1.0px;background:#d6dde9"></div>
<div class="ln" style="left:16.5px;width:973.9px;top:367.50px;height:1.0px;background:#d6dde9"></div>
<div class="ln" style="left:16.5px;width:973.9px;top:387.80px;height:1.0px;background:#d6dde9"></div>
<div class="ln" style="left:16.5px;width:973.9px;top:409.50px;height:1.0px;background:#d6dde9"></div>
<div class="ln" style="left:16.5px;width:973.9px;top:420.20px;height:1.0px;background:#d6dde9"></div>
<div class="ln" style="left:16.5px;width:973.9px;top:442.30px;height:1.0px;background:#d6dde9"></div>
<div class="ln" style="left:16.5px;width:973.9px;top:452.40px;height:1.0px;background:#d6dde9"></div>
<div class="ln" style="left:16.5px;width:973.9px;top:462.50px;height:1.0px;background:#d6dde9"></div>
<div class="ln" style="left:16.5px;width:973.9px;top:473.00px;height:1.0px;background:#d6dde9"></div>
<div class="ln" style="left:16.5px;width:973.9px;top:494.40px;height:1.0px;background:#d6dde9"></div>
<div class="ln" style="left:16.5px;width:973.9px;top:504.80px;height:1.0px;background:#d6dde9"></div>
<div class="ln" style="left:203.10px;width:1.0px;top:133.6px;height:371.7px;background:#d6dde9"></div>
<div class="ln" style="left:225.70px;width:1.0px;top:133.6px;height:371.7px;background:#d6dde9"></div>
<div class="ln" style="left:251.90px;width:1.0px;top:133.6px;height:371.7px;background:#d6dde9"></div>
<div class="ln" style="left:290.10px;width:1.0px;top:133.6px;height:371.7px;background:#d6dde9"></div>
<div class="ln" style="left:325.90px;width:1.0px;top:133.6px;height:371.7px;background:#d6dde9"></div>
<div class="ln" style="left:369.10px;width:1.0px;top:133.6px;height:371.7px;background:#d6dde9"></div>
<div class="ln" style="left:414.70px;width:1.0px;top:133.6px;height:371.7px;background:#d6dde9"></div>
<div class="ln" style="left:437.10px;width:1.0px;top:133.6px;height:371.7px;background:#d6dde9"></div>
<div class="ln" style="left:463.90px;width:1.0px;top:133.6px;height:371.7px;background:#d6dde9"></div>
<div class="ln" style="left:495.10px;width:1.0px;top:133.6px;height:371.7px;background:#d6dde9"></div>
<div class="ln" style="left:525.10px;width:1.0px;top:133.6px;height:371.7px;background:#d6dde9"></div>
<div class="ln" style="left:561.90px;width:1.0px;top:133.6px;height:371.7px;background:#d6dde9"></div>
<div class="ln" style="left:597.90px;width:1.0px;top:133.6px;height:371.7px;background:#d6dde9"></div>
<div class="ln" style="left:642.70px;width:1.0px;top:133.6px;height:371.7px;background:#d6dde9"></div>
<div class="ln" style="left:691.10px;width:1.0px;top:133.6px;height:371.7px;background:#d6dde9"></div>
<div class="ln" style="left:737.10px;width:1.0px;top:133.6px;height:371.7px;background:#d6dde9"></div>
<div class="ln" style="left:777.10px;width:1.0px;top:133.6px;height:371.7px;background:#d6dde9"></div>
<div class="ln" style="left:841.10px;width:1.0px;top:133.6px;height:371.7px;background:#d6dde9"></div>
<div class="ln" style="left:879.10px;width:1.0px;top:133.6px;height:371.7px;background:#d6dde9"></div>
<div class="ln" style="left:915.90px;width:1.0px;top:133.6px;height:371.7px;background:#d6dde9"></div>
<div class="ln" style="left:953.10px;width:1.0px;top:133.6px;height:371.7px;background:#d6dde9"></div>
<div class="ln" style="left:989.90px;width:1.0px;top:133.6px;height:371.7px;background:#d6dde9"></div>
<div class="ln" style="left:841.6px;top:174.7px;width:38.0px;height:90.8px;background:#ffff00;"></div>
<div class="ln" style="left:369.6px;top:347.5px;width:45.6px;height:10.2px;background:#ffff99;box-shadow:inset 0 0 0 0.7px #555;"></div>
<div class="ln" style="left:643.2px;top:347.5px;width:48.4px;height:10.2px;background:#ffff99;"></div>
<div class="ln" style="left:369.6px;top:494.9px;width:45.6px;height:10.4px;background:#ffff00;"></div>
<div class="ln" style="left:643.2px;top:494.9px;width:48.4px;height:10.4px;background:#ffff00;"></div>
<div class="ln" style="left:0;top:133.6px;width:16.5px;height:371.7px;background:#e4ecf7"></div>
<div class="ln" style="left:0.0px;width:16.5px;top:143.50px;height:1.0px;background:#9eb6ce"></div>
<div class="rh k" style="top:133.6px;height:10.4px;color:#2a2a2a"><span>1</span></div>
<div class="ln" style="left:0.0px;width:16.5px;top:153.90px;height:1.0px;background:#9eb6ce"></div>
<div class="rh k" style="top:144.0px;height:10.4px;color:#2222f4"><span>2</span></div>
<div class="ln" style="left:0.0px;width:16.5px;top:164.00px;height:1.0px;background:#9eb6ce"></div>
<div class="rh k" style="top:154.4px;height:10.1px;color:#2222f4"><span>3</span></div>
<div class="ln" style="left:0.0px;width:16.5px;top:174.20px;height:1.0px;background:#9eb6ce"></div>
<div class="rh k" style="top:164.5px;height:10.2px;color:#2222f4"><span>4</span></div>
<div class="ln" style="left:0.0px;width:16.5px;top:183.40px;height:1.0px;background:#9eb6ce"></div>
<div class="rh k" style="top:174.7px;height:9.2px;color:#2222f4"><span>40</span></div>
<div class="ln" style="left:0.0px;width:16.5px;top:192.10px;height:1.0px;background:#9eb6ce"></div>
<div class="rh k" style="top:183.9px;height:8.7px;color:#2222f4"><span>41</span></div>
<div class="ln" style="left:0.0px;width:16.5px;top:237.50px;height:1.0px;background:#9eb6ce"></div>
<div class="rh k" style="top:192.6px;height:45.4px;color:#2222f4"><span>42</span></div>
<div class="ln" style="left:0.0px;width:16.5px;top:265.00px;height:1.0px;background:#9eb6ce"></div>
<div class="rh k" style="top:238.0px;height:27.5px;color:#2222f4"><span>43</span></div>
<div class="ln" style="left:0.0px;width:16.5px;top:275.10px;height:1.0px;background:#9eb6ce"></div>
<div class="rh k" style="top:265.5px;height:10.1px;color:#2222f4"><span>46</span></div>
<div class="ln" style="left:0.0px;width:16.5px;top:285.50px;height:1.0px;background:#9eb6ce"></div>
<div class="rh k" style="top:275.6px;height:10.4px;color:#2222f4"><span>47</span></div>
<div class="ln" style="left:0.0px;width:16.5px;top:295.70px;height:1.0px;background:#9eb6ce"></div>
<div class="rh k" style="top:286.0px;height:10.2px;color:#2222f4"><span>48</span></div>
<div class="ln" style="left:0.0px;width:16.5px;top:306.00px;height:1.0px;background:#9eb6ce"></div>
<div class="rh" style="top:296.2px;height:10.3px;color:#4c4c4c"><span>134</span></div>
<div class="ln" style="left:0.0px;width:16.5px;top:316.30px;height:1.0px;background:#9eb6ce"></div>
<div class="rh" style="top:306.5px;height:10.3px;color:#4c4c4c"><span>135</span></div>
<div class="ln" style="left:0.0px;width:16.5px;top:326.55px;height:1.0px;background:#9eb6ce"></div>
<div class="rh" style="top:316.8px;height:10.2px;color:#4c4c4c"><span>136</span></div>
<div class="ln" style="left:0.0px;width:16.5px;top:336.80px;height:1.0px;background:#9eb6ce"></div>
<div class="rh" style="top:327.1px;height:10.2px;color:#4c4c4c"><span>137</span></div>
<div class="ln" style="left:0.0px;width:16.5px;top:347.00px;height:1.0px;background:#9eb6ce"></div>
<div class="rh" style="top:337.3px;height:10.2px;color:#4c4c4c"><span>138</span></div>
<div class="ln" style="left:0.0px;width:16.5px;top:357.25px;height:1.0px;background:#9eb6ce"></div>
<div class="rh" style="top:347.5px;height:10.2px;color:#4c4c4c"><span>139</span></div>
<div class="ln" style="left:0.0px;width:16.5px;top:367.50px;height:1.0px;background:#9eb6ce"></div>
<div class="rh" style="top:357.8px;height:10.2px;color:#4c4c4c"><span>140</span></div>
<div class="ln" style="left:0.0px;width:16.5px;top:387.80px;height:1.0px;background:#9eb6ce"></div>
<div class="rh" style="top:368.0px;height:20.3px;color:#4c4c4c"><span>141</span></div>
<div class="ln" style="left:0.0px;width:16.5px;top:409.50px;height:1.0px;background:#9eb6ce"></div>
<div class="rh" style="top:388.3px;height:21.7px;color:#4c4c4c"><span>142</span></div>
<div class="ln" style="left:0.0px;width:16.5px;top:420.20px;height:1.0px;background:#9eb6ce"></div>
<div class="rh" style="top:410.0px;height:10.7px;color:#4c4c4c"><span>143</span></div>
<div class="ln" style="left:0.0px;width:16.5px;top:442.30px;height:1.0px;background:#9eb6ce"></div>
<div class="rh" style="top:420.7px;height:22.1px;color:#4c4c4c"><span>144</span></div>
<div class="ln" style="left:0.0px;width:16.5px;top:452.40px;height:1.0px;background:#9eb6ce"></div>
<div class="rh" style="top:442.8px;height:10.1px;color:#4c4c4c"><span>145</span></div>
<div class="ln" style="left:0.0px;width:16.5px;top:462.50px;height:1.0px;background:#9eb6ce"></div>
<div class="rh" style="top:452.9px;height:10.1px;color:#4c4c4c"><span>146</span></div>
<div class="ln" style="left:0.0px;width:16.5px;top:473.00px;height:1.0px;background:#9eb6ce"></div>
<div class="rh" style="top:463.0px;height:10.5px;color:#4c4c4c"><span>147</span></div>
<div class="ln" style="left:0.0px;width:16.5px;top:494.40px;height:1.0px;background:#9eb6ce"></div>
<div class="rh" style="top:473.5px;height:21.4px;color:#4c4c4c"><span>148</span></div>
<div class="ln" style="left:0.0px;width:16.5px;top:504.80px;height:1.0px;background:#9eb6ce"></div>
<div class="rh" style="top:494.9px;height:10.4px;color:#4c4c4c"><span>149</span></div>
<div class="ln" style="left:16.00px;width:1.0px;top:123.0px;height:382.3px;background:#9eb6ce"></div>
<div class="ln colhdr" style="left:0;top:123.6px;width:990.4px;height:10px"></div>
<div class="ch" style="left:16.5px;width:187.1px">D</div>
<div class="ln" style="left:203.10px;width:1.0px;top:123.0px;height:10.6px;background:#9eb6ce"></div>
<div class="ch" style="left:203.6px;width:22.6px">E</div>
<div class="ln" style="left:225.70px;width:1.0px;top:123.0px;height:10.6px;background:#9eb6ce"></div>
<div class="ch" style="left:226.2px;width:26.2px">F</div>
<div class="ln" style="left:251.90px;width:1.0px;top:123.0px;height:10.6px;background:#9eb6ce"></div>
<div class="ch" style="left:252.4px;width:38.2px">G</div>
<div class="ln" style="left:290.10px;width:1.0px;top:123.0px;height:10.6px;background:#9eb6ce"></div>
<div class="ch" style="left:290.6px;width:35.8px">H</div>
<div class="ln" style="left:325.90px;width:1.0px;top:123.0px;height:10.6px;background:#9eb6ce"></div>
<div class="ch" style="left:326.4px;width:43.2px">I</div>
<div class="ln" style="left:369.10px;width:1.0px;top:123.0px;height:10.6px;background:#9eb6ce"></div>
<div class="ch" style="left:369.6px;width:45.6px">J</div>
<div class="ln" style="left:414.70px;width:1.0px;top:123.0px;height:10.6px;background:#9eb6ce"></div>
<div class="ch" style="left:415.2px;width:22.4px">K</div>
<div class="ln" style="left:437.10px;width:1.0px;top:123.0px;height:10.6px;background:#9eb6ce"></div>
<div class="ch" style="left:437.6px;width:26.8px">L</div>
<div class="ln" style="left:463.90px;width:1.0px;top:123.0px;height:10.6px;background:#9eb6ce"></div>
<div class="ch" style="left:464.4px;width:31.2px">M</div>
<div class="ln" style="left:495.10px;width:1.0px;top:123.0px;height:10.6px;background:#9eb6ce"></div>
<div class="ch" style="left:495.6px;width:30.0px">N</div>
<div class="ln" style="left:525.10px;width:1.0px;top:123.0px;height:10.6px;background:#9eb6ce"></div>
<div class="ch" style="left:525.6px;width:36.8px">O</div>
<div class="ln" style="left:561.90px;width:1.0px;top:123.0px;height:10.6px;background:#9eb6ce"></div>
<div class="ch" style="left:562.4px;width:36.0px">P</div>
<div class="ln" style="left:597.90px;width:1.0px;top:123.0px;height:10.6px;background:#9eb6ce"></div>
<div class="ch" style="left:598.4px;width:44.8px">Q</div>
<div class="ln" style="left:642.70px;width:1.0px;top:123.0px;height:10.6px;background:#9eb6ce"></div>
<div class="ch" style="left:643.2px;width:48.4px">R</div>
<div class="ln" style="left:691.10px;width:1.0px;top:123.0px;height:10.6px;background:#9eb6ce"></div>
<div class="ch" style="left:691.6px;width:46.0px">S</div>
<div class="ln" style="left:737.10px;width:1.0px;top:123.0px;height:10.6px;background:#9eb6ce"></div>
<div class="ch" style="left:737.6px;width:40.0px">T</div>
<div class="ln" style="left:777.10px;width:1.0px;top:123.0px;height:10.6px;background:#9eb6ce"></div>
<div class="ch" style="left:777.6px;width:64.0px">U</div>
<div class="ln" style="left:841.10px;width:1.0px;top:123.0px;height:10.6px;background:#9eb6ce"></div>
<div class="ch" style="left:841.6px;width:38.0px">V</div>
<div class="ln" style="left:879.10px;width:1.0px;top:123.0px;height:10.6px;background:#9eb6ce"></div>
<div class="ch" style="left:879.6px;width:36.8px">W</div>
<div class="ln" style="left:915.90px;width:1.0px;top:123.0px;height:10.6px;background:#9eb6ce"></div>
<div class="ln" style="left:916.4px;top:123px;width:37.2px;height:10.6px;background:linear-gradient(#f9d99f,#f1c15f);border-bottom:1px solid #f29536;box-sizing:border-box"></div>
<div class="ch" style="left:916.4px;width:37.2px">X</div>
<div class="ln" style="left:953.10px;width:1.0px;top:123.0px;height:10.6px;background:#9eb6ce"></div>
<div class="ch" style="left:953.6px;width:36.8px">Y</div>
<div class="ln" style="left:989.90px;width:1.0px;top:123.0px;height:10.6px;background:#9eb6ce"></div>
<div class="ln" style="left:0.0px;width:990.4px;top:133.10px;height:1.0px;background:#9eb6ce"></div>
<div class="ln" style="left:0.8px;top:123.8px;width:15.6px;height:9.6px;background:#a9c4ea"></div>
<svg class="ln" style="left:0;top:123px" width="17" height="11"><polygon points="13.4,4.4 13.4,8.6 9.4,8.6" fill="#e1eaf7"/></svg>
<div class="ln" style="left:16.5px;width:761.1px;top:173.50px;height:1.4px;background:#262626"></div>
<div class="ln" style="left:777.6px;width:212.8px;top:173.70px;height:1.0px;background:#9a9a9a"></div>
<div class="ln" style="left:252.4px;width:525.2px;top:142.75px;height:1.7px;background:#262626"></div>
<div class="ln" style="left:326.4px;width:88.8px;top:152.85px;height:1.7px;background:#262626"></div>
<div class="ln" style="left:464.4px;width:61.2px;top:152.85px;height:1.7px;background:#262626"></div>
<div class="ln" style="left:598.4px;width:179.2px;top:152.85px;height:1.7px;background:#262626"></div>
<div class="ln" style="left:290.6px;width:35.8px;top:162.95px;height:1.7px;background:#262626"></div>
<div class="ln" style="left:562.4px;width:36.0px;top:162.95px;height:1.7px;background:#262626"></div>
<div class="ln" style="left:203.03px;width:1.15px;top:133.0px;height:372.3px;background:#262626"></div>
<div class="ln" style="left:225.62px;width:1.15px;top:133.0px;height:372.3px;background:#262626"></div>
<div class="ln" style="left:251.83px;width:1.15px;top:133.0px;height:372.3px;background:#262626"></div>
<div class="ln" style="left:290.03px;width:1.15px;top:143.4px;height:361.9px;background:#262626"></div>
<div class="ln" style="left:325.82px;width:1.15px;top:143.4px;height:361.9px;background:#262626"></div>
<div class="ln" style="left:369.03px;width:1.15px;top:153.8px;height:351.5px;background:#262626"></div>
<div class="ln" style="left:414.62px;width:1.15px;top:143.4px;height:361.9px;background:#262626"></div>
<div class="ln" style="left:437.03px;width:1.15px;top:143.4px;height:361.9px;background:#262626"></div>
<div class="ln" style="left:463.82px;width:1.15px;top:143.4px;height:361.9px;background:#262626"></div>
<div class="ln" style="left:495.03px;width:1.15px;top:153.8px;height:351.5px;background:#262626"></div>
<div class="ln" style="left:525.02px;width:1.15px;top:143.4px;height:361.9px;background:#262626"></div>
<div class="ln" style="left:561.82px;width:1.15px;top:143.4px;height:361.9px;background:#262626"></div>
<div class="ln" style="left:597.82px;width:1.15px;top:143.4px;height:361.9px;background:#262626"></div>
<div class="ln" style="left:642.62px;width:1.15px;top:153.8px;height:351.5px;background:#262626"></div>
<div class="ln" style="left:691.02px;width:1.15px;top:133.0px;height:372.3px;background:#262626"></div>
<div class="ln" style="left:737.02px;width:1.15px;top:153.8px;height:351.5px;background:#262626"></div>
<div class="ln" style="left:777.02px;width:1.15px;top:133.0px;height:372.3px;background:#262626"></div>
<div class="ln" style="left:840.30px;width:1.6px;top:133.0px;height:372.3px;background:#262626"></div>
<div class="ln" style="left:0.0px;width:16.5px;top:173.65px;height:1.1px;background:#5a5a5a"></div>
<div class="ln" style="left:16.5px;width:187.1px;top:183.40px;height:1.0px;background:#262626"></div>
<div class="ln" style="left:16.5px;width:187.1px;top:192.10px;height:1.0px;background:#262626"></div>
<div class="ln" style="left:16.5px;width:187.1px;top:237.50px;height:1.0px;background:#262626"></div>
<div class="ln" style="left:16.5px;width:187.1px;top:265.00px;height:1.0px;background:#262626"></div>
<div class="ln" style="left:16.5px;width:187.1px;top:275.10px;height:1.0px;background:#262626"></div>
<div class="ln" style="left:16.5px;width:187.1px;top:285.50px;height:1.0px;background:#262626"></div>
<div class="ln" style="left:16.5px;width:187.1px;top:295.70px;height:1.0px;background:#262626"></div>
<div class="ln" style="left:369.6px;width:45.6px;top:336.80px;height:1.0px;background:#262626"></div>
<div class="c b" style="left:252.4px;width:162.8px;bottom:374.1px;">ΕΓΚΕΚΡΙΜΕΝΕΣ</div>
<div class="c b" style="left:415.2px;width:110.4px;bottom:374.1px;">ΠΡΟΤΕΙΝΟΜΕΝΕΣ</div>
<div class="c b" style="left:525.6px;width:166.0px;bottom:374.1px;">ΠΡΟΤΕΙΝΟΜΕΝΕΣ</div>
<div class="c" style="left:691.6px;width:86.0px;bottom:374.1px;">ΔΙΑΦΟΡΕΣ</div>
<div class="c" style="left:290.6px;width:35.8px;bottom:364.4px;">Τιμή</div>
<div class="c" style="left:562.4px;width:36.0px;bottom:364.4px;">Τιμή</div>
<div class="c m b" style="left:329.9px;width:43.2px;bottom:364.4px;font-size:6.95px;">Δαπάνη</div>
<div class="c m b" style="left:459.9px;width:61.2px;bottom:364.4px;font-size:6.95px;">Δαπάνη</div>
<div class="c m b" style="left:601.9px;width:44.8px;bottom:364.4px;font-size:6.95px;">Δαπάνη</div>
<div class="c" style="left:203.6px;width:22.6px;bottom:353.9px;">Αριθ</div>
<div class="c" style="left:226.2px;width:26.2px;bottom:353.9px;">Μονά</div>
<div class="c" style="left:252.4px;width:38.2px;bottom:353.9px;">Ποσό</div>
<div class="c" style="left:290.6px;width:35.8px;bottom:353.9px;">Μονάδος</div>
<div class="c" style="left:326.4px;width:43.2px;bottom:353.9px;">Μερική</div>
<div class="c" style="left:369.6px;width:45.6px;bottom:353.9px;">Ολική</div>
<div class="c" style="left:415.2px;width:22.4px;bottom:353.9px;">Ποσό</div>
<div class="c" style="left:437.6px;width:26.8px;bottom:353.9px;">Τιμή</div>
<div class="c" style="left:464.4px;width:31.2px;bottom:353.9px;">Μερική</div>
<div class="c" style="left:495.6px;width:30.0px;bottom:353.9px;">Ολική</div>
<div class="c" style="left:562.4px;width:36.0px;bottom:353.9px;">Μονάδος</div>
<div class="c" style="left:598.4px;width:44.8px;bottom:353.9px;">Μερική</div>
<div class="c" style="left:643.2px;width:48.4px;bottom:353.9px;">Ολική</div>
<div class="c" style="left:691.6px;width:46.0px;bottom:353.9px;">ΕΠΙ</div>
<div class="c" style="left:737.6px;width:40.0px;bottom:353.9px;">ΕΠΙ</div>
<div class="c m" style="left:525.6px;width:36.8px;bottom:353.9px;">Ποσό</div>
<div class="c m" style="left:780.8px;width:64.0px;bottom:353.9px;font-size:6.95px;">ΠΑΡΑΤΗΡΗΣΕΙΣ</div>
<div class="c" style="left:16.5px;width:187.1px;bottom:343.5px;">Ένδειξη Εργασιών</div>
<div class="c" style="left:203.6px;width:22.6px;bottom:343.5px;">Τιμολ</div>
<div class="c" style="left:226.2px;width:26.2px;bottom:343.5px;">δα</div>
<div class="c" style="left:252.4px;width:38.2px;bottom:343.5px;">τητα</div>
<div class="c" style="left:290.6px;width:35.8px;bottom:343.5px;">Ευρώ</div>
<div class="c" style="left:326.4px;width:43.2px;bottom:343.5px;">Δαπάνη</div>
<div class="c" style="left:369.6px;width:45.6px;bottom:343.5px;">Δαπάνη</div>
<div class="c" style="left:415.2px;width:22.4px;bottom:343.5px;">τητα</div>
<div class="c" style="left:437.6px;width:26.8px;bottom:343.5px;">Μονάδος</div>
<div class="c" style="left:464.4px;width:31.2px;bottom:343.5px;">Δαπάνη</div>
<div class="c" style="left:495.6px;width:30.0px;bottom:343.5px;">Δαπάνη</div>
<div class="c" style="left:562.4px;width:36.0px;bottom:343.5px;">Ευρώ</div>
<div class="c" style="left:598.4px;width:44.8px;bottom:343.5px;">Δαπάνη</div>
<div class="c" style="left:643.2px;width:48.4px;bottom:343.5px;">Δαπάνη</div>
<div class="c" style="left:691.6px;width:46.0px;bottom:343.5px;">ΠΛΕΟΝ</div>
<div class="c" style="left:737.6px;width:40.0px;bottom:343.5px;">ΕΛΑΤΤΟΝ</div>
<div class="c m" style="left:525.6px;width:36.8px;bottom:343.5px;">τητα</div>
<div class="c m" style="left:203.6px;width:22.6px;bottom:334.3px;font-size:6.4px;">21</div>
<div class="c m b" style="left:226.2px;width:26.2px;bottom:334.3px;">τεμ</div>
<div class="c r" style="left:252.4px;width:38.2px;bottom:334.3px;">1.00</div>
<div class="c r b" style="left:290.6px;width:35.8px;bottom:334.3px;">250.00</div>
<div class="c r b" style="left:326.4px;width:43.2px;bottom:334.3px;">250.00</div>
<div class="c r" style="left:525.6px;width:36.8px;bottom:334.3px;">1.00</div>
<div class="c r" style="left:562.4px;width:36.0px;bottom:334.3px;">250.00</div>
<div class="c r b" style="left:598.4px;width:44.8px;bottom:334.3px;">250.00</div>
<div class="c m" style="left:203.6px;width:22.6px;bottom:325.6px;font-size:6.4px;">22</div>
<div class="c m b" style="left:226.2px;width:26.2px;bottom:325.6px;">τεμ</div>
<div class="c r" style="left:252.4px;width:38.2px;bottom:325.6px;">3.00</div>
<div class="c r b" style="left:290.6px;width:35.8px;bottom:325.6px;">42.00</div>
<div class="c r b" style="left:326.4px;width:43.2px;bottom:325.6px;">126.00</div>
<div class="c r" style="left:525.6px;width:36.8px;bottom:325.6px;">7.00</div>
<div class="c r" style="left:562.4px;width:36.0px;bottom:325.6px;">42.00</div>
<div class="c r b" style="left:598.4px;width:44.8px;bottom:325.6px;">294.00</div>
<div class="c r" style="left:691.6px;width:46.0px;bottom:325.6px;">168.00</div>
<div class="c m" style="left:203.6px;width:22.6px;bottom:280.2px;font-size:6.4px;">23</div>
<div class="c m b" style="left:226.2px;width:26.2px;bottom:280.2px;">τεμ</div>
<div class="c r" style="left:252.4px;width:38.2px;bottom:280.2px;">1.00</div>
<div class="c r b" style="left:290.6px;width:35.8px;bottom:280.2px;">305.00</div>
<div class="c r b" style="left:326.4px;width:43.2px;bottom:280.2px;">305.00</div>
<div class="c r" style="left:525.6px;width:36.8px;bottom:280.2px;">1.00</div>
<div class="c r" style="left:562.4px;width:36.0px;bottom:280.2px;">305.00</div>
<div class="c r b" style="left:598.4px;width:44.8px;bottom:280.2px;">305.00</div>
<div class="c m" style="left:203.6px;width:22.6px;bottom:252.7px;font-size:6.4px;">24</div>
<div class="c m b" style="left:226.2px;width:26.2px;bottom:252.7px;">kg</div>
<div class="c r" style="left:252.4px;width:38.2px;bottom:252.7px;">100.00</div>
<div class="c r b" style="left:290.6px;width:35.8px;bottom:252.7px;">3.80</div>
<div class="c r b" style="left:326.4px;width:43.2px;bottom:252.7px;">380.00</div>
<div class="c r" style="left:525.6px;width:36.8px;bottom:252.7px;">100.00</div>
<div class="c r" style="left:562.4px;width:36.0px;bottom:252.7px;">3.80</div>
<div class="c r b" style="left:598.4px;width:44.8px;bottom:252.7px;">380.00</div>
<div class="c r b" style="left:326.4px;width:43.2px;bottom:242.6px;">24391.00</div>
<div class="c r b" style="left:598.4px;width:44.8px;bottom:242.6px;">23500.50</div>
<div class="c r b" style="left:691.6px;width:46.0px;bottom:242.6px;">168.00</div>
<div class="c r b" style="left:737.6px;width:40.0px;bottom:242.6px;">1058.50</div>
<div class="c r b" style="left:326.4px;width:43.2px;bottom:232.2px;">12195.50</div>
<div class="c r b" style="left:369.6px;width:45.6px;bottom:232.2px;">12195.50</div>
<div class="c r b" style="left:598.4px;width:44.8px;bottom:232.2px;">11750.25</div>
<div class="c r b" style="left:643.2px;width:48.4px;bottom:232.2px;">11750.25</div>
<div class="c r b" style="left:691.6px;width:46.0px;bottom:232.2px;">84.00</div>
<div class="c r b" style="left:737.6px;width:40.0px;bottom:232.2px;">529.25</div>
<div class="c r b" style="left:369.6px;width:45.6px;bottom:201.4px;">25575.75</div>
<div class="c r b" style="left:643.2px;width:48.4px;bottom:201.4px;">27942.94</div>
<div class="c r b" style="left:691.6px;width:46.0px;bottom:201.4px;">4640.67</div>
<div class="c r b" style="left:737.6px;width:40.0px;bottom:201.4px;">2273.48</div>
<div class="c r b" style="left:841.6px;width:38.0px;bottom:201.4px;">27942.94</div>
<div class="c r b" style="left:879.6px;width:36.8px;bottom:201.4px;">0.00</div>
<div class="c b" style="left:916.4px;width:37.2px;bottom:201.4px;">OK</div>
<div class="c r" style="left:290.6px;width:35.8px;bottom:191.1px;">18%</div>
<div class="c r" style="left:326.4px;width:43.2px;bottom:191.1px;">14151.10</div>
<div class="c r" style="left:369.6px;width:45.6px;bottom:191.1px;">2547.20</div>
<div class="c r" style="left:598.4px;width:44.8px;bottom:191.1px;">7524.03</div>
<div class="c r" style="left:643.2px;width:48.4px;bottom:191.1px;">1354.33</div>
<div class="c r" style="left:691.6px;width:46.0px;bottom:191.1px;">835.32</div>
<div class="c r" style="left:737.6px;width:40.0px;bottom:191.1px;">409.23</div>
<div class="c r" style="left:290.6px;width:35.8px;bottom:180.9px;">28%</div>
<div class="c r" style="left:326.4px;width:43.2px;bottom:180.9px;">11424.65</div>
<div class="c r" style="left:369.6px;width:45.6px;bottom:180.9px;">3198.90</div>
<div class="c r" style="left:598.4px;width:44.8px;bottom:180.9px;">20418.91</div>
<div class="c r" style="left:643.2px;width:48.4px;bottom:180.9px;">5717.29</div>
<div class="c r b" style="left:369.6px;width:45.6px;bottom:170.7px;">31321.85</div>
<div class="c r b" style="left:643.2px;width:48.4px;bottom:170.7px;">35014.56</div>
<div class="c r b" style="left:691.6px;width:46.0px;bottom:170.7px;">5475.99</div>
<div class="c r b" style="left:737.6px;width:40.0px;bottom:170.7px;">2682.71</div>
<div class="c r" style="left:326.4px;width:43.2px;bottom:160.4px;">15%</div>
<div class="c r" style="left:369.6px;width:45.6px;bottom:160.4px;">4698.28</div>
<div class="c r" style="left:643.2px;width:48.4px;bottom:160.4px;">1214.43</div>
<div class="c r" style="left:737.6px;width:40.0px;bottom:160.4px;">3483.85</div>
<div class="c r b" style="left:841.6px;width:38.0px;bottom:160.4px;">1005.58</div>
<div class="c r b" style="left:369.6px;width:45.6px;bottom:150.2px;">36020.13</div>
<div class="c r b" style="left:643.2px;width:48.4px;bottom:150.2px;">36228.99</div>
<div class="c r b" style="left:691.6px;width:46.0px;bottom:150.2px;">5475.99</div>
<div class="c r b" style="left:737.6px;width:40.0px;bottom:150.2px;">6166.56</div>
<div class="c r" style="left:369.6px;width:45.6px;bottom:130.5px;">0.00</div>
<div class="c r" style="left:643.2px;width:48.4px;bottom:130.5px;">0.00</div>
<div class="c r" style="left:879.6px;width:36.8px;bottom:130.5px;">20418.91</div>
<div class="c r" style="left:916.4px;width:37.2px;bottom:130.5px;">8376.21</div>
<div class="c r" style="left:953.6px;width:36.8px;bottom:130.5px;">28795.12</div>
<div class="c r" style="left:369.6px;width:45.6px;bottom:108.8px;">0.00</div>
<div class="c r" style="left:643.2px;width:48.4px;bottom:108.8px;">0.00</div>
<div class="c r" style="left:879.6px;width:36.8px;bottom:108.8px;">32147.53</div>
<div class="c r" style="left:916.4px;width:37.2px;bottom:108.8px;">12157.23</div>
<div class="c r" style="left:953.6px;width:36.8px;bottom:108.8px;">44304.76</div>
<div class="c r" style="left:369.6px;width:45.6px;bottom:98.1px;">36020.13</div>
<div class="c r" style="left:643.2px;width:48.4px;bottom:98.1px;">36228.99</div>
<div class="c r" style="left:691.6px;width:46.0px;bottom:98.1px;">5475.99</div>
<div class="c r" style="left:737.6px;width:40.0px;bottom:98.1px;">6166.56</div>
<div class="c r" style="left:369.6px;width:45.6px;bottom:76.0px;">0.00</div>
<div class="c r" style="left:643.2px;width:48.4px;bottom:76.0px;">0.00</div>
<div class="c r b" style="left:369.6px;width:45.6px;bottom:65.9px;">36020.13</div>
<div class="c r b" style="left:643.2px;width:48.4px;bottom:65.9px;">36228.99</div>
<div class="c r" style="left:369.6px;width:45.6px;bottom:55.8px;">0.00</div>
<div class="c r" style="left:643.2px;width:48.4px;bottom:55.8px;">0.00</div>
<div class="c r" style="left:369.6px;width:45.6px;bottom:45.3px;">36020.13</div>
<div class="c r" style="left:643.2px;width:48.4px;bottom:45.3px;">36228.99</div>
<div class="c r" style="left:369.6px;width:45.6px;bottom:23.9px;">0.00</div>
<div class="c r" style="left:643.2px;width:48.4px;bottom:23.9px;">0.00</div>
<div class="c r b" style="left:369.6px;width:45.6px;bottom:13.5px;">36020.13</div>
<div class="c r b" style="left:643.2px;width:48.4px;bottom:13.5px;">36228.99</div>
<div class="c r b" style="left:691.6px;width:46.0px;bottom:13.5px;">5475.99</div>
<div class="c r b" style="left:737.6px;width:40.0px;bottom:13.5px;">6166.56</div>
<div class="c r b" style="left:879.6px;width:36.8px;bottom:13.5px;">208.86</div>
<div class="c" style="left:16.5px;width:187.1px;bottom:334.3px;"><span style="letter-spacing:0.005px">Χυτοσίδηρος κρουνός πυρκαγιάς</span></div>
<div class="c" style="left:16.5px;width:187.1px;bottom:325.6px;"><span style="letter-spacing:0.137px">Σύνδεση ιδιωτικών παροχών (ΑΝΤΙΚΑΤΑΣΤΑΣΗ)</span></div>
<div class="c b" style="left:16.5px;width:187.1px;bottom:242.6px;"><span style="letter-spacing:-0.008px">Άθροισμα κεφαλαίου</span></div>
<div class="c b" style="left:16.5px;width:187.1px;bottom:232.2px;"><span style="letter-spacing:0.050px">Αφαιρείται Έκπτωση&nbsp; 50 %</span></div>
<div class="c b" style="left:16.5px;width:187.1px;bottom:201.4px;"><span style="letter-spacing:-0.089px">Άθροισμα</span></div>
<div class="c" style="left:16.5px;width:187.1px;bottom:191.1px;"><span style="letter-spacing:0.126px">Προστίθεται Γ.Ε. &amp; Ο.Ε. 18%</span></div>
<div class="c" style="left:16.5px;width:187.1px;bottom:180.9px;"><span style="letter-spacing:0.126px">Προστίθεται Γ.Ε. &amp; Ο.Ε. 28%</span></div>
<div class="c b" style="left:16.5px;width:187.1px;bottom:170.7px;"><span style="letter-spacing:-0.089px">Άθροισμα</span></div>
<div class="c" style="left:16.5px;width:187.1px;bottom:160.4px;"><span style="letter-spacing:0.074px">Απρόβλεπτη δαπάνη</span></div>
<div class="c b" style="left:16.5px;width:187.1px;bottom:150.2px;"><span style="letter-spacing:-0.089px">Άθροισμα</span></div>
<div class="c w" style="left:16.5px;width:187.1px;bottom:130.7px;"><span style="letter-spacing:0.112px">Προστίθεται δαπάνη Απολογιστικών Εργασιών. (Δαπάνη</span><br><span style="letter-spacing:0.034px">Ασφάλτου)</span></div>
<div class="c w" style="left:16.5px;width:187.1px;bottom:109.0px;"><span style="letter-spacing:0.126px">Προστίθεται Γ.Ε. &amp; Ο.Ε. 18% επί των Απολογιστικών</span><br><span style="letter-spacing:-0.207px">Εργασιών</span></div>
<div class="c" style="left:16.5px;width:187.1px;bottom:98.1px;"><span style="letter-spacing:-0.131px">Άθροισμα</span></div>
<div class="c w" style="left:16.5px;width:187.1px;bottom:76.2px;"><span style="letter-spacing:0.080px">Αφαιρείται η έκπτωση επί του οφέλους των Απολογιστικών</span><br><span style="letter-spacing:-0.207px">Εργασιών</span></div>
<div class="c b" style="left:16.5px;width:187.1px;bottom:65.9px;"><span style="letter-spacing:-0.089px">Άθροισμα</span></div>
<div class="c" style="left:16.5px;width:187.1px;bottom:55.8px;"><span style="letter-spacing:-0.073px">Πρόβλεψη αναθεώρησης</span></div>
<div class="c" style="left:16.5px;width:187.1px;bottom:45.3px;"><span style="letter-spacing:-0.131px">Άθροισμα</span></div>
<div class="c w" style="left:16.5px;width:187.1px;bottom:24.1px;"><span style="letter-spacing:0.052px">Αφαιρείται η αναλογία της τεκμαρτής έκπτωσης επί της</span><br><span style="letter-spacing:0.015px">δαπάνης αναθεώρησης</span></div>
<div class="c b" style="left:16.5px;width:187.1px;bottom:13.5px;"><span style="letter-spacing:-0.089px">Άθροισμα</span></div>
<div class="c w" style="left:16.5px;width:187.1px;top:193.2px"><span style="letter-spacing:0.086px">Σύνδεση υφιστάμενου αγωγού από οποιοδήποτε υλικό</span><br><span style="letter-spacing:0.048px">εκτός ΡΕ με νέο αγωγό οποιουδήποτε υλικού και διαμέτρου</span><br><span style="letter-spacing:0.088px">με χρήση ειδικών συνδέσμων, με απομόνωση του δικτύου</span><br><span style="letter-spacing:0.026px">ύδρευσης. Για διάμετρο υφισταμένου αγωγού Φ 80 ή Φ 100</span></div>
<div class="c w" style="left:16.5px;width:187.1px;top:237.8px"><span style="letter-spacing:0.094px">Ειδικά τεμάχια (καμπύλες, ταύ, συστολές, πώματα κ.λπ.)</span><br><span style="letter-spacing:0.067px">από ελατό χυτοσίδηρο, ή χυτοσίδηρο σφαιροειδούς γραφίτη</span><br><span style="letter-spacing:0.043px">(ductile iron).</span></div>
<div class="ln" style="left:633px;top:344px;width:68.2px;height:16.9px;border:3.1px solid #ec1c24;box-sizing:border-box"></div>
<div class="ln" style="left:0;top:505.3px;width:1000px;height:13.7px;background:linear-gradient(#cddbf0,#b7cbe8)"></div>
<div class="ln" style="left:0;top:504.8px;width:654px;height:1px;background:#c3d1e6"></div>
<svg class="ln" style="left:0;top:505.3px" width="50" height="14" viewBox="0 0 50 14">
<g fill="#1f45a8"><rect x="3.6" y="4.2" width="1.1" height="5.6"/><path d="M8.6 4.2 V9.8 L5.2 7 Z"/>
<path d="M19.4 4.2 V9.8 L16 7 Z"/>
<path d="M26.4 4.2 V9.8 L29.8 7 Z"/>
<path d="M36.6 4.2 V9.8 L40 7 Z"/><rect x="40.4" y="4.2" width="1.1" height="5.6"/></g></svg>
<div class="ln" style="left:45.4px;top:506.8px;width:1px;height:10.5px;background:#8ea6cb"></div><div class="ln" style="left:46.4px;top:506.8px;width:1px;height:10.5px;background:#e6eef9"></div>
<svg class="ln" style="left:0;top:505.3px" width="660" height="13.7" viewBox="0 0 660 13.7"><defs><linearGradient id="tg" x1="0" y1="0" x2="0" y2="1"><stop offset="0" stop-color="#f4f8fd"/><stop offset="0.18" stop-color="#e0e9f6"/><stop offset="1" stop-color="#cbd9ee"/></linearGradient></defs><path d="M47.5 13.699999999999989 L60.5 0.5 L631 0.5 L645.5 13.699999999999989 Z" fill="url(#tg)"/><path d="M431.0 0 L431.0 12.099999999999989 Q431.0 13.699999999999989 433.5 13.699999999999989 L463.5 13.699999999999989 L472.5 0 Z" fill="#fff"/><path d="M47.5 14.199999999999989 Q52.5 13.199999999999989 54.5 10.699999999999989 L60.5 0" stroke="#7f96b8" stroke-width="0.8" fill="none"/><path d="M82.7 14.199999999999989 Q87.7 13.199999999999989 89.7 10.699999999999989 L96 0" stroke="#7f96b8" stroke-width="0.8" fill="none"/><path d="M149 14.199999999999989 Q154 13.199999999999989 156 10.699999999999989 L162.5 0" stroke="#7f96b8" stroke-width="0.8" fill="none"/><path d="M215 14.199999999999989 Q220 13.199999999999989 222 10.699999999999989 L228.5 0" stroke="#7f96b8" stroke-width="0.8" fill="none"/><path d="M263 14.199999999999989 Q268 13.199999999999989 270 10.699999999999989 L276.2 0" stroke="#7f96b8" stroke-width="0.8" fill="none"/><path d="M362 14.199999999999989 Q367 13.199999999999989 369 10.699999999999989 L375.2 0" stroke="#7f96b8" stroke-width="0.8" fill="none"/><path d="M431.0 0 V13.699999999999989" stroke="#7f96b8" stroke-width="0.8" fill="none"/><path d="M459.5 14.199999999999989 Q464.5 13.199999999999989 466.5 10.699999999999989 L472.5 0" stroke="#7f96b8" stroke-width="0.8" fill="none"/><path d="M502 14.199999999999989 Q507 13.199999999999989 509 10.699999999999989 L515.5 0" stroke="#7f96b8" stroke-width="0.8" fill="none"/><path d="M552.7 14.199999999999989 Q557.7 13.199999999999989 559.7 10.699999999999989 L566 0" stroke="#7f96b8" stroke-width="0.8" fill="none"/><path d="M599.5 14.199999999999989 Q604.5 13.199999999999989 606.5 10.699999999999989 L612.5 0" stroke="#7f96b8" stroke-width="0.8" fill="none"/><path d="M624 14.199999999999989 Q629 13.199999999999989 631 10.699999999999989 L637.5 0" stroke="#7f96b8" stroke-width="0.8" fill="none"/><rect x="619" y="4" width="6.6" height="5.4" rx="0.8" fill="#f4f6fa" stroke="#8a96aa" stroke-width="0.6"/><path d="M617.4 2.6 L619 4.2 M619.8 2 L619.4 3.8 M616.8 4.6 L618.6 4.6" stroke="#e8a01a" stroke-width="0.9"/><circle cx="619" cy="4.2" r="1.2" fill="#f5b82a"/></svg>
<div class="ln tb" style="left:61.2px;top:506.6px;letter-spacing:-0.629px;">ΠΠΑΕ</div>
<div class="ln tb" style="left:101.2px;top:506.6px;letter-spacing:-0.191px;">1_An_Msrm</div>
<div class="ln tb" style="left:167.0px;top:506.6px;letter-spacing:-0.146px;">2_An_Msrm</div>
<div class="ln tb" style="left:231.2px;top:506.6px;letter-spacing:-0.419px;">3_ΠΠΑΕ</div>
<div class="ln tb" style="left:282.0px;top:506.6px;letter-spacing:-0.398px;">ΦΟΡΜΑ ΕΙΣΑΓΩΓΗΣ</div>
<div class="ln tb" style="left:379.5px;top:506.6px;letter-spacing:-0.129px;">Check20%</div>
<div class="ln tb" style="left:437.5px;top:506.6px;letter-spacing:-0.079px;font-weight:bold;color:#1f3a78;">APE1</div>
<div class="ln tb" style="left:475.5px;top:506.6px;letter-spacing:-0.417px;">Msrm 0</div>
<div class="ln tb" style="left:520.0px;top:506.6px;letter-spacing:0.096px;">Budget0</div>
<div class="ln tb" style="left:570.7px;top:506.6px;letter-spacing:-0.076px;">Options</div>
<div class="ln" style="left:653.6px;top:505.3px;width:346.4px;height:13.7px;background:linear-gradient(#9db4d6,#8da8cf 40%,#86a2cb)"></div>
<div class="ln" style="left:655.4px;top:506.9px;width:2.6px;height:10px;background:#eef3fa;border:0.6px solid #5f789f;box-sizing:border-box"></div>
<div class="ln" style="left:664.6px;top:508.9px;width:3.8px;height:6.2px;background:#1f3f7f;clip-path:polygon(100% 0,100% 100%,0 50%)"></div>
<div class="ln" style="left:984.8px;top:508.9px;width:3.8px;height:6.2px;background:#1f3f7f;clip-path:polygon(0 0,100% 50%,0 100%)"></div>
<div class="ln" style="left:709.2px;top:506.1px;width:260px;height:13.7px;border-radius:2px;background:linear-gradient(#f3f7fc,#dde7f4 45%,#cfdcee 55%,#d9e4f2);border:0.8px solid #6f88ae;box-sizing:border-box"></div>
<div class="ln" style="left:836.6px;top:509.3px;width:4.6px;height:5px;background:repeating-linear-gradient(90deg,#6f86ac 0,#6f86ac 0.7px,transparent 0.7px,transparent 1.4px)"></div>
<div class="ln" style="left:990.8px;top:123.6px;width:2.2px;height:381.7px;background:#fff"></div>
<div class="ln" style="left:990.8px;top:123.6px;width:2.2px;height:10px;background:linear-gradient(#ffffff 0,#f2f5fa 14%,#e6ebf3 50%,#d4dce9 100%)"></div>
<div class="ln" style="left:990.8px;top:133.1px;width:1.6px;height:1px;background:#9eb6ce"></div>
<div class="ln" style="left:990.8px;top:173.7px;width:1.4px;height:1px;background:#9a9a9a"></div>
<div class="ln" style="left:992.9px;top:123px;width:7.1px;height:382.3px;background:linear-gradient(90deg,#9db5d8,#8ea9d0 40%,#86a2cb)"></div>
<div class="ln" style="left:995.6px;top:127.6px;width:6px;height:3.6px;background:#1f3f7f;clip-path:polygon(50% 0,100% 100%,0 100%)"></div>
<div class="ln" style="left:995.6px;top:496.4px;width:6px;height:3.6px;background:#1f3f7f;clip-path:polygon(0 0,100% 0,50% 100%)"></div>
<div class="ln" style="left:993.8px;top:181px;width:10px;height:39px;border-radius:2px;background:linear-gradient(90deg,#f3f7fc,#dde7f4 45%,#cfdcee);border:0.8px solid #6f88ae;box-sizing:border-box"></div>
<div class="ln" style="left:996.4px;top:198px;width:5px;height:4.6px;background:repeating-linear-gradient(0deg,#6f86ac 0,#6f86ac 0.7px,transparent 0.7px,transparent 1.4px)"></div>
<div class="ln" style="left:990.6px;top:133.6px;width:1px;height:371.7px;background:#c8d2e0"></div>
<div class="ln" style="left:0;top:517px;width:1000px;height:2px;background:linear-gradient(#7d9fd8,#4472c4)"></div>
</div>
</body>
</html>
